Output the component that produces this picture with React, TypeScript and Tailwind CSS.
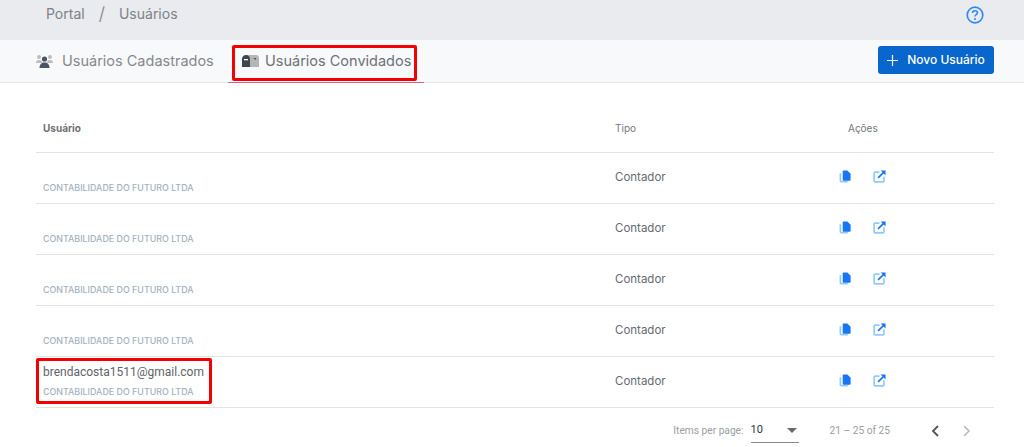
import React from "react";

const rows = ["", "", "", "", "brendacosta1511@gmail.com"];

const CopyIcon = () => (
  <svg width="13" height="13" viewBox="0 0 14 14">
    <path d="M1.500 3.500v8.200c0 .5.4.9.9.9h7.100" fill="none" stroke="#90caf9" strokeWidth="1.800" />
    <path d="M5 .5h4L12.500 4v6.500c0 .6-.4 1-1 1H5c-.6 0-1-.4-1-1v-9c0-.6.4-1 1-1z" fill="#1976f2" />
  </svg>
);

const OpenIcon = () => (
  <svg width="13" height="13" viewBox="0 0 14 14" fill="none">
    <path d="M7 2.200H2.200c-.6 0-1 .4-1 1v8.600c0 .6.4 1 1 1h8.600c.6 0 1-.4 1-1V7" stroke="#90caf9" strokeWidth="1.800" />
    <path d="M5.500 8.500 12 2" stroke="#1976f2" strokeWidth="1.800" />
    <path d="M8.200 .5h5.300v5.300z" fill="#1976f2" />
  </svg>
);

const UsersIcon = () => (
  <svg width="17" height="14" viewBox="0 0 17 14">
    <circle cx="3" cy="3" r="2" fill="#bdbdbd" />
    <circle cx="14" cy="3" r="2" fill="#bdbdbd" />
    <path d="M0 9c0-2 1-3 3-3s3 1 3 3zM11 9c0-2 1-3 3-3s3 1 3 3z" fill="#bdbdbd" />
    <circle cx="8.500" cy="5" r="2.600" fill="#4b5563" />
    <path d="M3.500 14c0-3.500 2-5.500 5-5.500s5 2 5 5.500z" fill="#4b5563" />
  </svg>
);

const MailboxIcon = () => (
  <svg width="17" height="12" viewBox="0 0 17 12">
    <path d="M5 0h9c1.700 0 3 1.300 3 3v9H5z" fill="#b5b5b5" />
    <path d="M11 3l3 2v-2z" fill="#4b5563" />
    <path d="M0 12V4c0-2.200 1.500-4 4-4s4 1.800 4 4v8z" fill="#3f4650" />
    <rect x="2" y="4" width="4" height="1.300" fill="#fff" />
  </svg>
);

export default function App() {
  return (
    <div className="w-[1024px] h-[447px] overflow-hidden relative bg-white font-['Inter',sans-serif]">
      {/* breadcrumb */}
      <div className="h-10 bg-[#e9ebee] flex items-start justify-between pl-[46px] pr-[40px]">
        <div className="flex items-center gap-[14px] text-[14px] leading-[28px] text-[#7c8288]">
          <span>Portal</span>
          <span className="text-[18px] font-light">/</span>
          <span>Usuários</span>
        </div>
        <svg className="mt-[6px]" width="18" height="18" viewBox="0 0 18 18" fill="none">
          <circle cx="9" cy="9" r="7.800" stroke="#2f8af5" strokeWidth="1.700" />
          <path d="M6.500 7c0-1.500 1.100-2.300 2.500-2.300s2.500.8 2.500 2.100c0 1.900-2.500 1.900-2.500 3.700" stroke="#2f8af5" strokeWidth="1.600" />
          <circle cx="9" cy="13" r="1" fill="#2f8af5" />
        </svg>
      </div>

      {/* tabs */}
      <div className="h-[43px] bg-[#f8f9fa] border-b border-[#e4e6e8] flex items-start justify-between pl-[36px] pr-[30px]">
        <div className="flex">
          <div className="flex items-center gap-[9px] h-[42px] w-[192px] text-[14.500px] text-[#85898e]">
            <UsersIcon />
            <span>Usuários Cadastrados</span>
          </div>
          <div className="flex items-center gap-[6px] h-[43px] w-[196px] pl-[14px] border-b-[1.500px] border-[#e9588f] text-[14.500px] text-[#6d7278]">
            <MailboxIcon />
            <span>Usuários Convidados</span>
          </div>
        </div>
        <button className="mt-[6px] h-[28px] w-[116px] rounded-[3px] bg-[#0866cc] text-white text-[12px] font-medium flex items-center justify-center gap-[9px]">
          <svg width="11" height="11" viewBox="0 0 11 11">
            <path d="M5.500 0v11M0 5.500h11" stroke="#fff" strokeWidth="1.200" />
          </svg>
          Novo Usuário
        </button>
      </div>

      {/* table */}
      <div className="ml-[36px] mr-[30px] mt-px font-['Roboto',sans-serif]">
        <div className="h-[69px] grid grid-cols-[579px_188px_1fr] items-center border-b border-[#e3e3e3] text-[10px] text-[#72777c] pt-[21px]">
          <span className="pl-[7px] font-bold font-['Inter',sans-serif] text-[#6c7075]">Usuário</span>
          <span className="font-['Inter',sans-serif]">Tipo</span>
          <span className="pl-[45px] font-['Inter',sans-serif]">Ações</span>
        </div>
        {rows.map((email, i) => (
          <div key={i} className="h-[51px] grid grid-cols-[579px_188px_1fr] border-b border-[#e3e3e3]">
            <div className="pl-[7px] pt-[7px]">
              <div className="h-[16px] text-[12px] leading-[16px] text-[#5f6368]">{email}</div>
              <div className="mt-[6px] text-[8.900px] leading-[12px] font-medium text-[#a3b2c0] font-['Inter',sans-serif]">
                CONTABILIDADE DO FUTURO LTDA
              </div>
            </div>
            <div className="text-[11.500px] leading-[48px] text-[#656a70] font-['Inter',sans-serif]">Contador</div>
            <div className="flex items-center gap-[21px] pl-[36px] pb-[3px]">
              <CopyIcon />
              <OpenIcon />
            </div>
          </div>
        ))}
      </div>

      {/* pagination */}
      <div className="mx-[36px] mt-[3px] h-[40px] flex items-center justify-end pr-[16px] font-['Roboto',sans-serif] text-[10.200px] text-[#9a9ea2]">
        <span>Items per page:</span>
        <div className="ml-[7px] w-[48px] h-[24px] border-b border-[#8a8a8a] flex items-center justify-between pr-[2px] text-[11px] text-[#2d3640]">
          <span>10</span>
          <span className="w-0 h-0 border-x-[5px] border-x-transparent border-t-[5px] border-t-[#666b70]" />
        </div>
        <span className="ml-[31px] text-[10.200px]">21 – 25 of 25</span>
        <svg className="ml-[40px]" width="10" height="12" viewBox="0 0 10 12" fill="none">
          <path d="M8 1 3 6l5 5" stroke="#50555a" strokeWidth="1.800" />
        </svg>
        <svg className="ml-[22px]" width="10" height="12" viewBox="0 0 10 12" fill="none">
          <path d="m2 1 5 5-5 5" stroke="#b5b8bb" strokeWidth="1.500" />
        </svg>
      </div>

      {/* red marks drawn over the screenshot */}
      <div className="absolute left-[232px] top-[45px] w-[185px] h-[36px] border-[3px] border-[#f50000] rounded-[2px]" />
      <div className="absolute left-[36px] top-[358px] w-[176px] h-[46px] border-[3px] border-[#f50000] rounded-[2px]" />
    </div>
  );
}
